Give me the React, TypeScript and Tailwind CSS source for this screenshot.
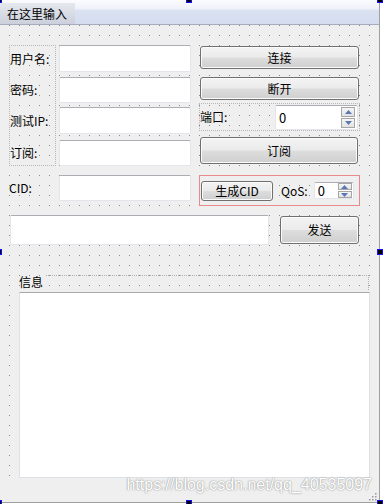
import React from 'react';

const FONT = "font-['Noto_Sans_CJK_SC','Liberation_Sans',sans-serif]";

function LineEdit({ className = '' }: { className?: string }) {
  return (
    <div className={`bg-white rounded-[2px] border border-[#e3e5ea] border-t-[#abadb3] ${className}`} />
  );
}

function QtButton({ children, className = '' }: { children: React.ReactNode; className?: string }) {
  return (
    <button
      className={`rounded-[3px] border border-[#707070] bg-[linear-gradient(#f3f3f3_0%,#ebebeb_48%,#dddddd_52%,#cfcfcf_100%)] shadow-[inset_0_0_0_1px_#fbfbfb] text-[12px] leading-none text-black flex items-center justify-center ${className}`}
    >
      {children}
    </button>
  );
}

function Arrow({ up }: { up?: boolean }) {
  return (
    <svg width="7" height="4" viewBox="0 0 7 4">
      <path d={up ? 'M0 4 L3.5 0 L7 4 Z' : 'M0 0 L7 0 L3.5 4 Z'} fill="#5878b4" />
    </svg>
  );
}

function SpinBox({ className = '', btnH }: { className?: string; btnH: string }) {
  return (
    <div className={`bg-white rounded-[2px] border border-[#e3e5ea] border-t-[#abadb3] flex items-center ${className}`}>
      <span className="flex-1 pl-[3px] text-[13px] leading-none text-black">0</span>
      <div className="flex flex-col gap-[1px] mr-[1px]">
        <div className={`w-[14px] ${btnH} border border-[#a6a6a6] bg-[linear-gradient(#f6f6f6,#e2e2e2)] flex items-center justify-center`}>
          <Arrow up />
        </div>
        <div className={`w-[14px] ${btnH} border border-[#a6a6a6] bg-[linear-gradient(#f6f6f6,#e2e2e2)] flex items-center justify-center`}>
          <Arrow />
        </div>
      </div>
    </div>
  );
}

function Label({ children, className = '' }: { children: React.ReactNode; className?: string }) {
  return <div className={`flex items-center text-[12px] leading-none text-black whitespace-nowrap ${className}`}>{children}</div>;
}

const HANDLES: [number, number][] = [
  [-4, -3], [186, -3], [377, -3],
  [-4, 249], [377, 249],
  [-4, 500], [186, 500], [377, 500],
];

export default function App() {
  return (
    <div className={`w-[383px] h-[504px] bg-white relative overflow-hidden ${FONT}`}>
      <div className="w-[380px] h-[503px] border-r border-b border-[#a0a0a0] bg-[#efefef] flex flex-col">
        {/* menu bar */}
        <div className="h-[25px] shrink-0 border-b border-[#a5adbf] bg-[linear-gradient(#fbfcfe_0%,#eef1f9_38%,#dae1f1_42%,#d4dcef_100%)] flex items-end">
          <div className="w-[75px] h-[21px] bg-[linear-gradient(#e6e8ee,#cbd0dc)] flex items-center pl-[7px] text-[12px] text-black">
            在这里输入
          </div>
        </div>

        {/* form body with designer grid */}
        <div className="h-[456px] shrink-0 flex flex-col bg-[radial-gradient(circle_at_0.5px_0.5px,#8a8a8a_0.6px,transparent_0.8px)] bg-[length:10px_10px] bg-[position:9px_0px]">
          <div className="flex items-start mt-[20px]">
            <div className="ml-[9px] w-[47px] h-[121px] border border-dotted border-[#b8b8b8] flex flex-col">
              <Label className="h-[26px]">用户名:</Label>
              <Label className="h-[26px] mt-[5px]">密码:</Label>
              <Label className="h-[27px] mt-[4px]">测试IP:</Label>
              <Label className="h-[25px] mt-[6px]">订阅:</Label>
            </div>
            <div className="ml-[3px] w-[132px] flex flex-col">
              <LineEdit className="h-[27px]" />
              <LineEdit className="h-[26px] mt-[5px]" />
              <LineEdit className="h-[27px] mt-[4px]" />
              <LineEdit className="h-[26px] mt-[6px]" />
            </div>
            <div className="ml-[9px] w-[160px] flex flex-col">
              <QtButton className="w-[159px] h-[23px] mt-[1px]">连接</QtButton>
              <QtButton className="w-[159px] h-[23px] mt-[8px]">断开</QtButton>
              <div className="-ml-[1px] w-[161px] h-[28px] mt-[3px] border border-dotted border-[#b8b8b8] flex items-center">
                <Label className="flex-1">端口:</Label>
                <SpinBox className="w-[83px] h-[25px] mr-[1px] pr-[1px]" btnH="h-[10px]" />
              </div>
              <QtButton className="w-[158px] h-[27px] mt-[6px]">订阅</QtButton>
            </div>
          </div>

          <div className="flex items-start mt-[9px]">
            <Label className="ml-[9px] w-[50px] h-[26px]">CID:</Label>
            <LineEdit className="w-[132px] h-[26px]" />
            <div className="ml-[8px] w-[161px] h-[31px] border border-[#e98a8a] flex items-center">
              <QtButton className="ml-[1px] w-[72px] h-[20px]">生成CID</QtButton>
              <Label className="ml-[8px]">QoS:</Label>
              <SpinBox className="ml-[6px] w-[40px] h-[17px]" btnH="h-[7px]" />
            </div>
          </div>

          <div className="flex items-start mt-[9px]">
            <LineEdit className="ml-[10px] w-[259px] h-[30px]" />
            <QtButton className="ml-[11px] mt-[1px] w-[79px] h-[28px]">发送</QtButton>
          </div>

          <div className="flex mt-[28px] h-[17px]">
            <Label className="ml-[19px] pr-[3px] h-[17px]">信息</Label>
            <div className="flex-1 mr-[10px] mt-[2px] border-t border-r border-dotted border-[#b0b0b0]" />
          </div>
          <div className="ml-[19px] mt-[2px] w-[351px] h-[186px] bg-white border border-[#dde1e6] border-t-[#a9a9a9]" />
        </div>
      </div>

      {/* watermark */}
      <div className="absolute right-[11px] top-[475px] font-['Liberation_Sans',sans-serif] text-[16px] leading-[20px] text-white [text-shadow:0_0_1px_#8a8a8a,0_0_2px_#b0b0b0]">
        https://blog.csdn.net/qq_40535097
      </div>

      {/* resize grip */}
      <svg className="absolute left-[369px] top-[493px]" width="8" height="8" viewBox="0 0 8 8">
        {[[6, 0], [3, 3], [6, 3], [0, 6], [3, 6], [6, 6]].map(([x, y]) => (
          <rect key={`${x}-${y}`} x={x} y={y} width="1.5" height="1.5" fill="#9a9a9a" />
        ))}
      </svg>

      {/* selection handles */}
      {HANDLES.map(([x, y]) => (
        <div
          key={`${x}-${y}`}
          className="absolute w-[6px] h-[6px] bg-black border border-[#1010ff]"
          style={{ left: x, top: y }}
        />
      ))}
    </div>
  );
}
